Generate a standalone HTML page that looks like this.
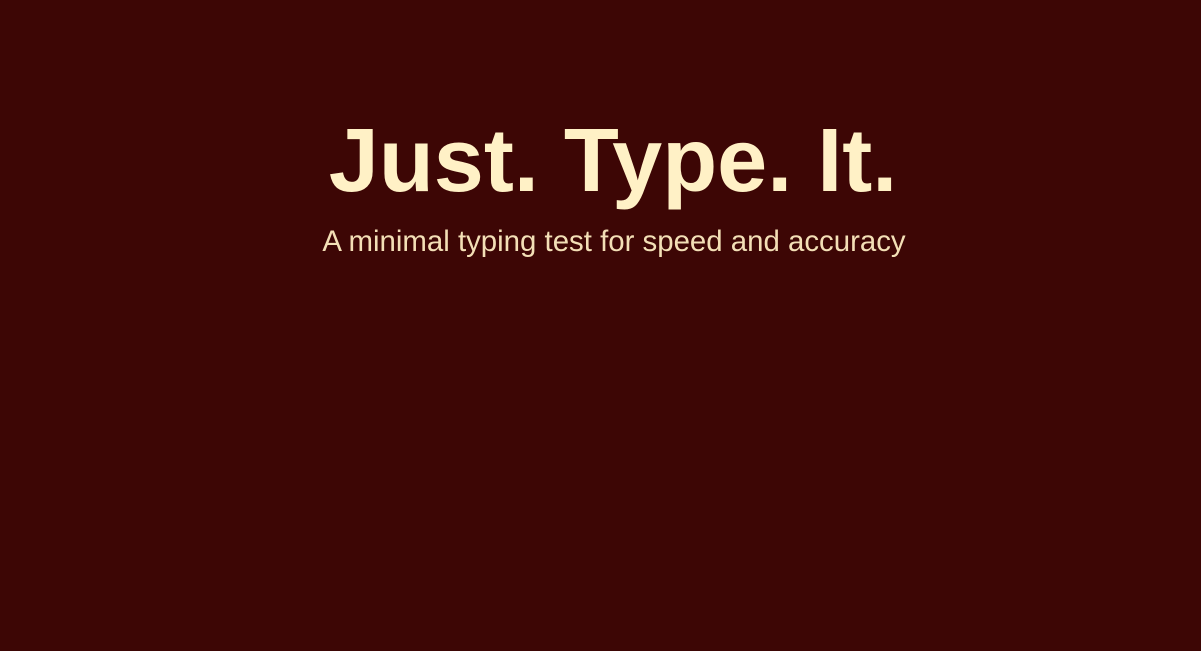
<!DOCTYPE html>
<html><head><meta charset="utf-8"><style>
html,body{margin:0;padding:0;width:1201px;height:651px;background:#3d0605;overflow:hidden}
h1{position:absolute;left:0;width:1201px;top:0;margin:0;text-align:center;font:bold 90px/1 "Liberation Sans",sans-serif;color:#fff1c6;padding-top:116px;padding-left:25px;box-sizing:border-box}
p{position:absolute;left:0;width:1201px;top:227px;margin:0;text-align:center;font:29.4px/1 "Liberation Sans",sans-serif;color:#f3dfb6;padding-left:27px;box-sizing:border-box}
</style></head><body>
<h1>Just. Type. It.</h1>
<p>A minimal typing test for speed and accuracy</p>
</body></html>
